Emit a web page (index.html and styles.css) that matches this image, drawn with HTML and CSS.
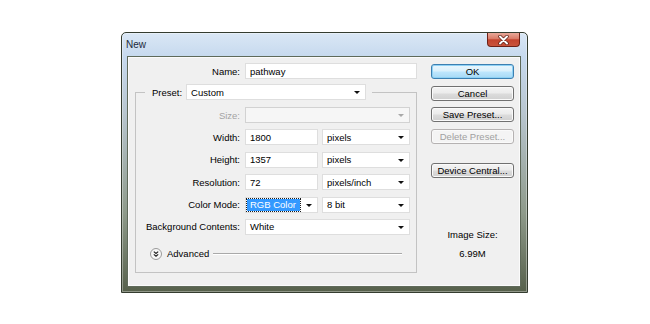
FILE: index.html
```html
<!DOCTYPE html>
<html lang="en">
<head>
  <meta charset="UTF-8" />
  <title>New</title>
  <link rel="stylesheet" href="styles.css">
</head>
<body>
  <div class="window">
    <div class="titlebar">
      <span class="title">New</span>
      <span class="close">
        <svg width="13" height="10" viewBox="0 0 13 10">
          <path d="M3 1.5 L10 8.5 M10 1.5 L3 8.5" stroke="#5a1d14" stroke-width="3.4" stroke-linecap="round"/>
          <path d="M3 1.5 L10 8.5 M10 1.5 L3 8.5" stroke="#fff" stroke-width="2" stroke-linecap="round"/>
        </svg>
      </span>
    </div>

    <div class="client">
      <div class="main">
        <div class="name-row">
          <label class="lbl name-lbl">Name:</label>
          <div class="field name-field">pathway</div>
        </div>

        <fieldset class="preset-box">
          <legend>
            <span class="legend-lbl">Preset:</span>
            <div class="field select preset-select">Custom<i class="arrow"></i></div>
          </legend>

          <div class="grid">
            <label class="lbl disabled">Size:</label>
            <div class="field select size-select"><i class="arrow grey"></i></div>

            <label class="lbl">Width:</label>
            <div class="pair">
              <div class="field num">1800</div>
              <div class="field select unit">pixels<i class="arrow"></i></div>
            </div>

            <label class="lbl">Height:</label>
            <div class="pair">
              <div class="field num">1357</div>
              <div class="field select unit">pixels<i class="arrow"></i></div>
            </div>

            <label class="lbl">Resolution:</label>
            <div class="pair">
              <div class="field num">72</div>
              <div class="field select unit">pixels/inch<i class="arrow"></i></div>
            </div>

            <label class="lbl">Color Mode:</label>
            <div class="pair">
              <div class="field select num mode"><span class="hl">RGB Color</span><i class="arrow"></i></div>
              <div class="field select unit">8 bit<i class="arrow"></i></div>
            </div>

            <label class="lbl">Background Contents:</label>
            <div class="field select full">White<i class="arrow"></i></div>
          </div>

          <div class="advanced">
            <span class="adv-icon">
              <svg width="12" height="12" viewBox="0 0 12 12">
                <circle cx="6" cy="6" r="5.5" fill="#f7f7f7" stroke="#9a9a9a"/>
                <path d="M3.8 3.6 L6 5.4 L8.2 3.6 M3.8 6.4 L6 8.2 L8.2 6.4" fill="none" stroke="#222" stroke-width="1.2"/>
              </svg>
            </span>
            <span>Advanced</span>
            <span class="rule"></span>
          </div>
        </fieldset>
      </div>

      <div class="side">
        <div class="btn default">OK</div>
        <div class="btn cancel">Cancel</div>
        <div class="btn save">Save Preset...</div>
        <div class="btn delete disabled">Delete Preset...</div>
        <div class="btn device">Device Central...</div>
        <div class="info first">Image Size:</div>
        <div class="info">6.99M</div>
      </div>
    </div>
  </div>
</body>
</html>
```

FILE: styles.css
```css
body {
  margin: 0;
  background: #fff;
  font-family: "Liberation Sans", Arial, sans-serif;
  font-size: 9.5px;
  color: #000;
}

.window {
  margin: 32px 0 0 121px;
  width: 407px;
  height: 261px;
  box-sizing: border-box;
  border: 1px solid #343c2f;
  border-radius: 5px 5px 0 0;
  padding: 0 6px 5px 5px;
  display: flex;
  flex-direction: column;
  background: linear-gradient(to bottom, #dae7f5 0px, #c6d9ee 24px, #b8c6cf 80px, #8e9a8a 180px, #56604b 259px);
  box-shadow: inset 0 0 0 1px rgba(255, 255, 255, 0.35);
}

.titlebar {
  height: 23px;
  display: flex;
  align-items: flex-start;
  justify-content: space-between;
}

.title {
  margin: 6px 0 0 -1px;
  font-size: 10px;
  color: #1c2a3a;
}

.close {
  width: 31px;
  height: 13px;
  margin-right: 1px;
  border: 1px solid #6d2016;
  border-top: none;
  border-radius: 0 0 4px 4px;
  background: linear-gradient(to bottom, #e9a99a 0%, #d97a66 45%, #c3432e 52%, #c9543c 100%);
  display: flex;
  align-items: center;
  justify-content: center;
}

.client {
  flex: 1;
  display: flex;
  background: #f0f0f0;
  border: 1px solid #5f6a5a;
  box-shadow: inset 0 0 0 1px #fbfbfb;
  padding: 6px 6px 0 0;
}

.main {
  width: 289px;
}

.name-row {
  display: flex;
  gap: 5px;
  height: 16px;
  align-items: center;
}

.lbl {
  text-align: right;
  white-space: nowrap;
}

.lbl.disabled {
  color: #a3a3a3;
}

.name-lbl {
  width: 112px;
}

.field {
  height: 16px;
  box-sizing: border-box;
  background: #fff;
  border: 1px solid #dedede;
  padding-left: 4px;
  display: flex;
  align-items: center;
  position: relative;
}

.name-field {
  width: 172px;
}

.arrow {
  position: absolute;
  right: 5px;
  top: 6px;
  width: 0;
  height: 0;
  border-left: 3px solid transparent;
  border-right: 3px solid transparent;
  border-top: 3px solid #111;
}

.arrow.grey {
  border-top-color: #a8a8a8;
}

.preset-box {
  margin: 5px 0 0 7px;
  width: 282px;
  box-sizing: border-box;
  border: 1px solid #c3c3c3;
  padding: 7px 0 11px 0;
}

.preset-box legend {
  margin-left: 9px;
  padding: 0 6px 0 7px;
  display: flex;
  align-items: center;
  gap: 4px;
}

.preset-select {
  width: 180px;
}

.grid {
  display: grid;
  grid-template-columns: 104px auto;
  column-gap: 5px;
  row-gap: 6.4px;
  align-items: center;
}

.size-select {
  width: 165px;
  background: #f6f6f6;
  border-color: #d2d2d2;
}

.full {
  width: 165px;
}

.pair {
  display: flex;
  gap: 4px;
}

.num {
  width: 73px;
}

.unit {
  width: 88px;
}

.mode {
  padding-left: 1px;
}

.hl {
  background: #3399ff;
  color: #fff;
  width: 50px;
  height: 12px;
  padding-left: 3px;
  line-height: 12px;
  outline: 1px dotted #1a1a1a;
}

.advanced {
  margin: 12px 14px 0 14px;
  height: 14px;
  display: flex;
  align-items: center;
  gap: 5px;
}

.adv-icon {
  display: flex;
}

.rule {
  flex: 1;
  height: 1px;
  margin-left: -1px;
  background: #a9a9a9;
  box-shadow: 0 1px 0 #fff;
}

.side {
  margin-left: 14px;
  width: 83px;
  display: flex;
  flex-direction: column;
  padding-top: 1px;
}

.btn {
  height: 15px;
  box-sizing: border-box;
  border: 1px solid #707070;
  border-radius: 3px;
  background: linear-gradient(to bottom, #f4f4f4 0%, #ebebeb 48%, #dcdcdc 52%, #d0d0d0 100%);
  display: flex;
  align-items: center;
  justify-content: center;
  box-shadow: inset 0 0 0 1px #fafafa;
}

.btn.default {
  border-color: #3c7fb1;
  box-shadow: inset 0 0 0 1px #8ed1f5;
  background: linear-gradient(to bottom, #eaf6fd 0%, #d9f0fc 48%, #bee6fd 52%, #a7d9f5 100%);
}

.btn.disabled {
  color: #a0a0a0;
  border-color: #b5b2b2;
  background: #f4f4f4;
}

.cancel { margin-top: 7px; }
.save { margin-top: 6px; }
.delete { margin-top: 7px; }
.device { margin-top: 19px; }

.info {
  text-align: center;
  height: 12px;
  line-height: 12px;
  margin-top: 7px;
}

.info.first {
  margin-top: 51px;
}
```
